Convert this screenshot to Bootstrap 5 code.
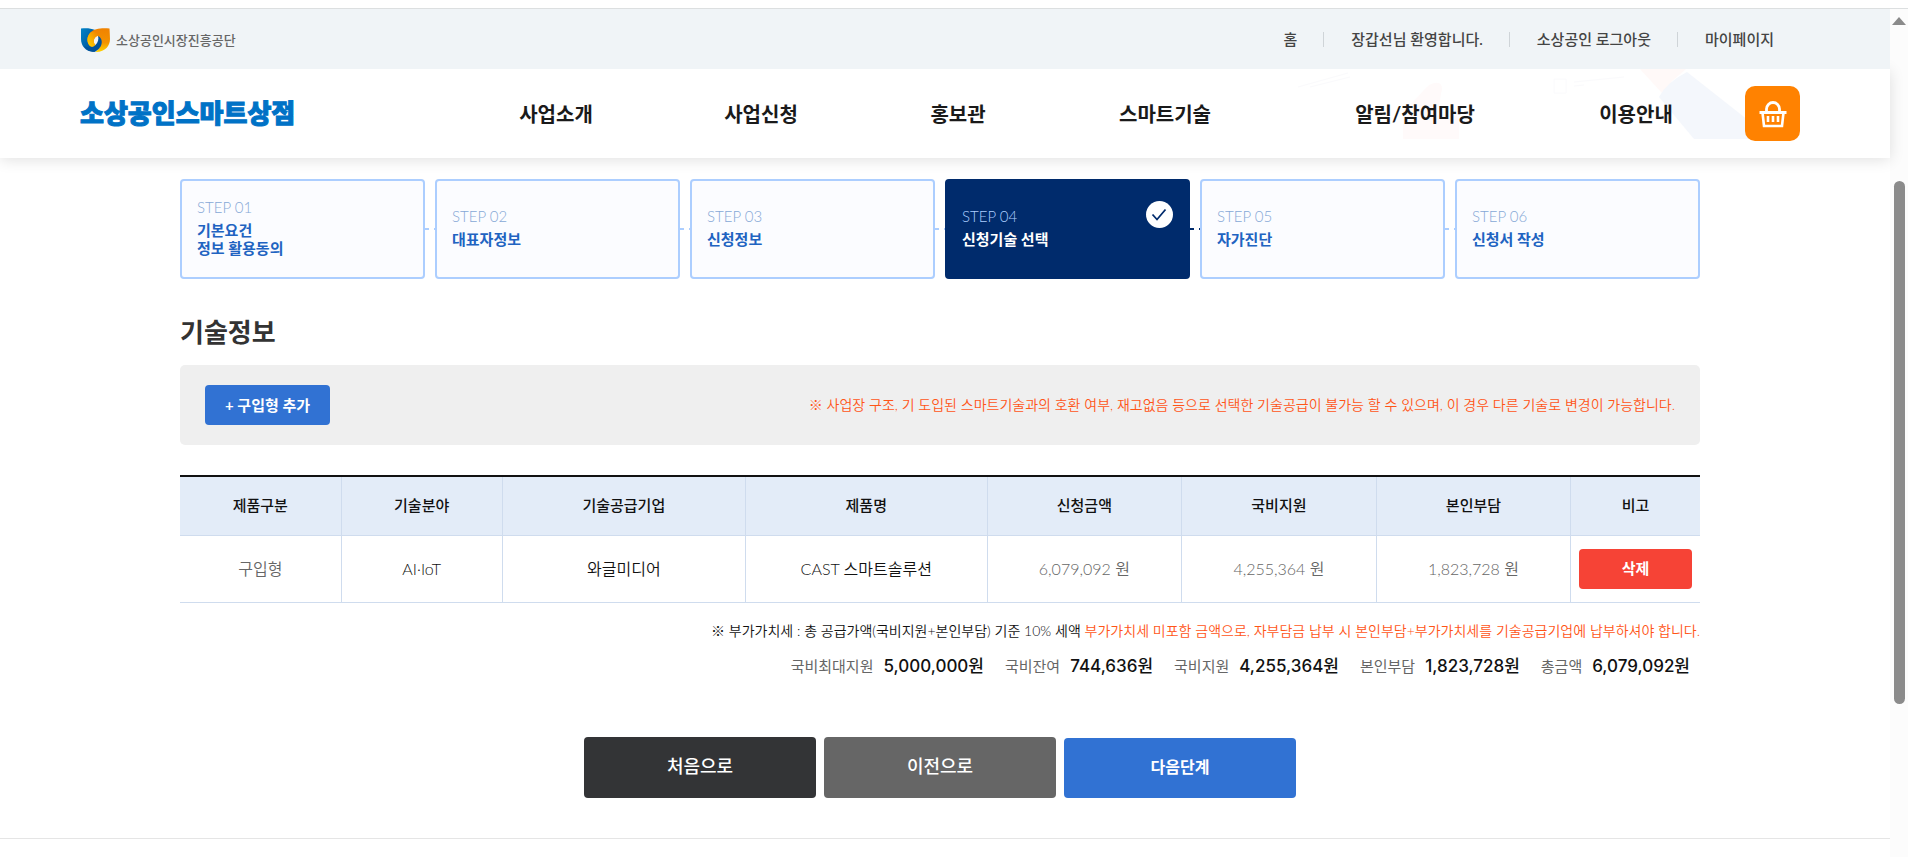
<!DOCTYPE html>
<html lang="ko">
<head>
<meta charset="utf-8">
<meta name="viewport" content="width=device-width, initial-scale=1">
<title>소상공인스마트상점</title>
<link href="https://cdn.jsdelivr.net/npm/bootstrap@5.3.0/dist/css/bootstrap.min.css" rel="stylesheet">
<style>
:root { --navy:#002b6c; --blue:#3172d3; --sky:#acceff; --line:#cfdcee; --warn:#ff5517; }
body { font-family:Lato,"Noto Sans CJK KR",sans-serif; font-size:16px; line-height:24px; color:#111; background:#fff; }
a { color:inherit; text-decoration:none; }
.shell { border-top:1px solid #dcdfe0; margin-top:8px; }
.topbar { background:#f0f4f7; height:60px; padding:0 116px 0 80px; position:relative; z-index:1; }
.agency { font-size:13px; font-weight:500; color:#666; gap:6px; padding-top:2px; }
.util { font-size:15px; font-weight:500; color:#444; line-height:20px; }
.util li + li { margin-left:26px; padding-left:28px; background:linear-gradient(#cfd4d8,#cfd4d8) left center/1px 15px no-repeat; }
.masthead { height:89px; padding:0 90px 0 80px; box-shadow:0 2px 14px rgba(0,0,0,.12); background:#fff; position:relative; }
.masthead > * { position:relative; }
.masthead > .backdrop { position:absolute; top:0; right:0; }
.brand { font-size:26px; font-weight:900; color:#0072c6; -webkit-text-stroke:1px #0072c6; line-height:36px; width:374px; padding-bottom:2px; }
.gnb { display:grid; grid-template-columns:204fr 206fr 188fr 226fr 274fr 168fr; font-size:20px; font-weight:700; color:#1a1a1a; text-align:center; margin-right:25px; }
.cart { width:55px; height:55px; background:#ff8201; border-radius:10px; border:0; padding:0; }
.content-wrap { padding-right:10px; }
.content { max-width:1520px; margin:0 auto; padding-top:21px; }
.steps { display:grid; grid-template-columns:repeat(6,1fr); gap:10px; }
.step { height:100px; border:2px solid var(--sky); border-radius:4px; background:#fbfcff; padding:0 15px 4px; position:relative; font-size:15px; line-height:18px; font-weight:700; color:#2163c1; }
.step small { display:block; font-size:15px; line-height:20px; margin-bottom:4px; font-weight:300; color:#86a8d6; }
.step:not(:last-child)::after { content:""; position:absolute; left:100%; top:47px; width:10px; height:2px; margin-left:2px; background:repeating-linear-gradient(90deg,var(--sky) 0 4px,transparent 4px 9px); }
.step.now { background:var(--navy); border-color:var(--navy); color:#fff; }
.step.now small { color:#acceff; }
.step.now::after { background:repeating-linear-gradient(90deg,var(--navy) 0 4px,transparent 4px 9px); }
.tick { position:absolute; right:15px; top:20px; }
h1 { font-size:26px; font-weight:700; line-height:36px; color:#333; margin:35px 0 15px; }
.toolbox { background:#efefef; border-radius:5px; padding:20px 25px; margin-bottom:30px; }
.btn { --bs-btn-border-width:0; --bs-btn-border-radius:4px; --bs-btn-color:#fff; --bs-btn-hover-color:#fff; --bs-btn-padding-x:0; font-weight:500; padding-top:0; padding-bottom:2px; }
.btn-sm40 { height:40px; font-size:15px; padding-bottom:0; }
.add, .del, .actions .next { font-weight:700; }
.add, .next { --bs-btn-bg:var(--blue); --bs-btn-hover-bg:#2a64bb; }
.add { width:125px; }
.del { --bs-btn-bg:#f64336; --bs-btn-hover-bg:#d9382d; }
.first { --bs-btn-bg:#333436; --bs-btn-hover-bg:#222; }
.prev { --bs-btn-bg:#666; --bs-btn-hover-bg:#555; }
.warn { color:var(--warn); }
.notice { font-size:14px; font-weight:350; }
.grid-data { table-layout:fixed; width:100%; border-top:2px solid #111; text-align:center; margin-bottom:16px; }
.grid-data th, .grid-data td { border-bottom:1px solid var(--line); border-left:1px solid var(--line); padding:0 8px; }
.grid-data th:first-child, .grid-data td:first-child { border-left:0; }
.grid-data th { height:59px; background:#e3ecf8; font-size:15px; font-weight:500; padding-bottom:2px; }
.grid-data td { height:67px; font-weight:350; }
.grid-data .dim { color:#666; }
.sums { gap:21px; padding-right:10px; margin-top:9px; line-height:28px; }
.sums dt { font-weight:400; font-size:15px; color:#666; }
.sums dd { margin:0 0 0 10px; font-size:17px; font-weight:500; font-family:Inter,"Noto Sans CJK KR",sans-serif; }
.actions { gap:8px; margin-top:57px; }
.actions .btn { width:232px; height:61px; font-size:18px; }
.actions .next { height:60px; font-size:16px; }
.foot { border-top:1px solid #e5e5e5; margin-top:40px; height:19px; }
.rail { width:18px; background:#fcfcfc; padding-top:8px; }
.thumb { width:11px; height:61vh; border-radius:6px; background:#8b8b8b; margin-top:156px; }
</style>
</head>
<body>
<div class="shell d-flex">
<div class="flex-grow-1">
  <div class="topbar d-flex align-items-center justify-content-between">
    <a href="#" class="agency d-flex align-items-center">
      <svg width="30" height="24" viewBox="0 0 30 24" aria-hidden="true">
        <defs>
          <linearGradient id="b" x1="0" y1="0" x2="1" y2="1"><stop offset="0" stop-color="#0083c9"/><stop offset="1" stop-color="#004a90"/></linearGradient>
          <linearGradient id="o" x1="0" y1="0" x2="0" y2="1"><stop offset="0" stop-color="#f08200"/><stop offset=".6" stop-color="#f39200"/><stop offset="1" stop-color="#ffd400"/></linearGradient>
          <linearGradient id="y" x1="1" y1="0" x2="0" y2="1"><stop offset="0" stop-color="#f08200"/><stop offset="1" stop-color="#ffd400"/></linearGradient>
        </defs>
        <path fill="url(#b)" d="M1 .5C6-.3 11 .2 15 2L10 14l5 9.700C6 24.500 1 18 1 11z"/>
        <path fill="url(#o)" d="M29.500.5C22-.3 14 .5 10.500 4.500 6.500 8.500 6.500 14.500 10 18c2 1.500 5 .5 5.500-1-3.500-3-1-9 2.500-9 3.500 4 4 12-3 15.900C25 24.500 30 18 30 11c0-4-.5-10.500-.5-10.500z"/>
        <path fill="url(#y)" d="M10.500 4.500C6.500 8.500 6.500 14.500 10 18c2 1.500 5 .5 5.500-1-3.500-3-1-9 2.500-9 1-2-4-5-7.500-3.500z"/>
        <path fill="#00529b" d="M18 8c5 2 6 11-3 15.800-5 .2-9-2.300-11-5.800 4 2 9 2 11.500-1C18 14.500 19 11 18 8z"/>
      </svg>소상공인시장진흥공단</a>
    <ul class="util list-unstyled d-flex mb-0">
      <li><a href="#">홈</a></li>
      <li>장갑선님 환영합니다.</li>
      <li><a href="#">소상공인 로그아웃</a></li>
      <li><a href="#">마이페이지</a></li>
    </ul>
  </div>

  <header class="masthead d-flex align-items-center">
    <svg class="backdrop" width="600" height="70" viewBox="0 0 600 70" aria-hidden="true">
      <path fill="#fff9f8" d="M350 0h46l-14 12-10 12z"/>
      <path fill="#f4f7fc" d="M397 3q-20 10-28 25l35 42h78z"/>
      <path fill="#fffafa" d="M113 70V42q10-8 20-20l6-6q13-6 13 4l-5 26q22-3 22 6v18z"/>
      <path fill="none" stroke="#fafafc" d="M264 10h12v14h-12zM284 13l50-5M284 17l10-1M8 18l50-14M20 18l40-10"/>
    </svg>
    <a href="#" class="brand">소상공인스마트상점</a>
    <nav class="gnb flex-grow-1">
      <a href="#">사업소개</a><a href="#">사업신청</a><a href="#">홍보관</a><a href="#">스마트기술</a><a href="#">알림/참여마당</a><a href="#">이용안내</a>
    </nav>
    <button type="button" class="cart" aria-label="장바구니">
      <svg class="d-block m-auto" width="28" height="28" viewBox="0 0 28 28" fill="none" stroke="#fff" aria-hidden="true">
        <path stroke-width="2.800" d="M.5 12.500h27M7.500 12V9a6.500 6.500 0 0 1 13 0v3"/>
        <path stroke-width="2.600" d="M3.500 12.500L5 26h18l1.500-13.500"/>
        <path stroke-width="2.600" d="M9 16v6M14 16v6M19 16v6"/>
      </svg>
    </button>
  </header>

  <div class="content-wrap">
  <main class="content">
    <div class="steps">
      <div class="step d-flex flex-column justify-content-center"><small>STEP 01</small><span>기본요건<br>정보 활용동의</span></div>
      <div class="step d-flex flex-column justify-content-center"><small>STEP 02</small><span>대표자정보</span></div>
      <div class="step d-flex flex-column justify-content-center"><small>STEP 03</small><span>신청정보</span></div>
      <div class="step now d-flex flex-column justify-content-center"><small>STEP 04</small><span>신청기술 선택</span>
        <svg class="tick" width="27" height="27" viewBox="0 0 27 27" aria-hidden="true"><circle cx="13.500" cy="13.500" r="13.500" fill="#fff"/><path d="M6.500 13.500l4.500 5 8.500-10" fill="none" stroke="#002b6c" stroke-width="1.800"/></svg>
      </div>
      <div class="step d-flex flex-column justify-content-center"><small>STEP 05</small><span>자가진단</span></div>
      <div class="step d-flex flex-column justify-content-center"><small>STEP 06</small><span>신청서 작성</span></div>
    </div>

    <h1>기술정보</h1>
    <div class="toolbox d-flex align-items-center justify-content-between">
      <button type="button" class="btn btn-sm40 add">+ 구입형 추가</button>
      <span class="notice warn">※ 사업장 구조, 기 도입된 스마트기술과의 호환 여부, 재고없음 등으로 선택한 기술공급이 불가능 할 수 있으며, 이 경우 다른 기술로 변경이 가능합니다.</span>
    </div>

    <table class="grid-data">
      <colgroup><col style="width:10.6%"><col style="width:10.6%"><col style="width:16%"><col style="width:15.9%"><col style="width:12.8%"><col style="width:12.8%"><col style="width:12.8%"><col style="width:8.5%"></colgroup>
      <thead><tr><th>제품구분</th><th>기술분야</th><th>기술공급기업</th><th>제품명</th><th>신청금액</th><th>국비지원</th><th>본인부담</th><th>비고</th></tr></thead>
      <tbody><tr><td class="dim">구입형</td><td>AI·IoT</td><td>와글미디어</td><td>CAST 스마트솔루션</td><td class="dim">6,079,092 원</td><td class="dim">4,255,364 원</td><td class="dim">1,823,728 원</td><td><button type="button" class="btn btn-sm40 del w-100">삭제</button></td></tr></tbody>
    </table>

    <p class="notice text-end mb-0">※ 부가가치세 : 총 공급가액(국비지원+본인부담) 기준 10% 세액 <span class="warn">부가가치세 미포함 금액으로, 자부담금 납부 시 본인부담+부가가치세를 기술공급기업에 납부하셔야 합니다.</span></p>
    <dl class="sums d-flex justify-content-end mb-0">
      <div class="d-flex"><dt>국비최대지원</dt><dd>5,000,000원</dd></div>
      <div class="d-flex"><dt>국비잔여</dt><dd>744,636원</dd></div>
      <div class="d-flex"><dt>국비지원</dt><dd>4,255,364원</dd></div>
      <div class="d-flex"><dt>본인부담</dt><dd>1,823,728원</dd></div>
      <div class="d-flex"><dt>총금액</dt><dd>6,079,092원</dd></div>
    </dl>

    <div class="actions d-flex justify-content-center align-items-end">
      <button type="button" class="btn first">처음으로</button>
      <button type="button" class="btn prev">이전으로</button>
      <button type="button" class="btn next">다음단계</button>
    </div>
  </main>
  </div>
  <footer class="foot"></footer>
</div>
<div class="rail d-flex flex-column align-items-center flex-shrink-0" aria-hidden="true">
  <svg width="14" height="8" viewBox="0 0 14 8"><path fill="#8b8b8b" d="M7 0l7 8H0z"/></svg>
  <div class="thumb"></div>
</div>
</div>
<script src="https://cdn.jsdelivr.net/npm/bootstrap@5.3.0/dist/js/bootstrap.bundle.min.js"></script>
</body>
</html>
